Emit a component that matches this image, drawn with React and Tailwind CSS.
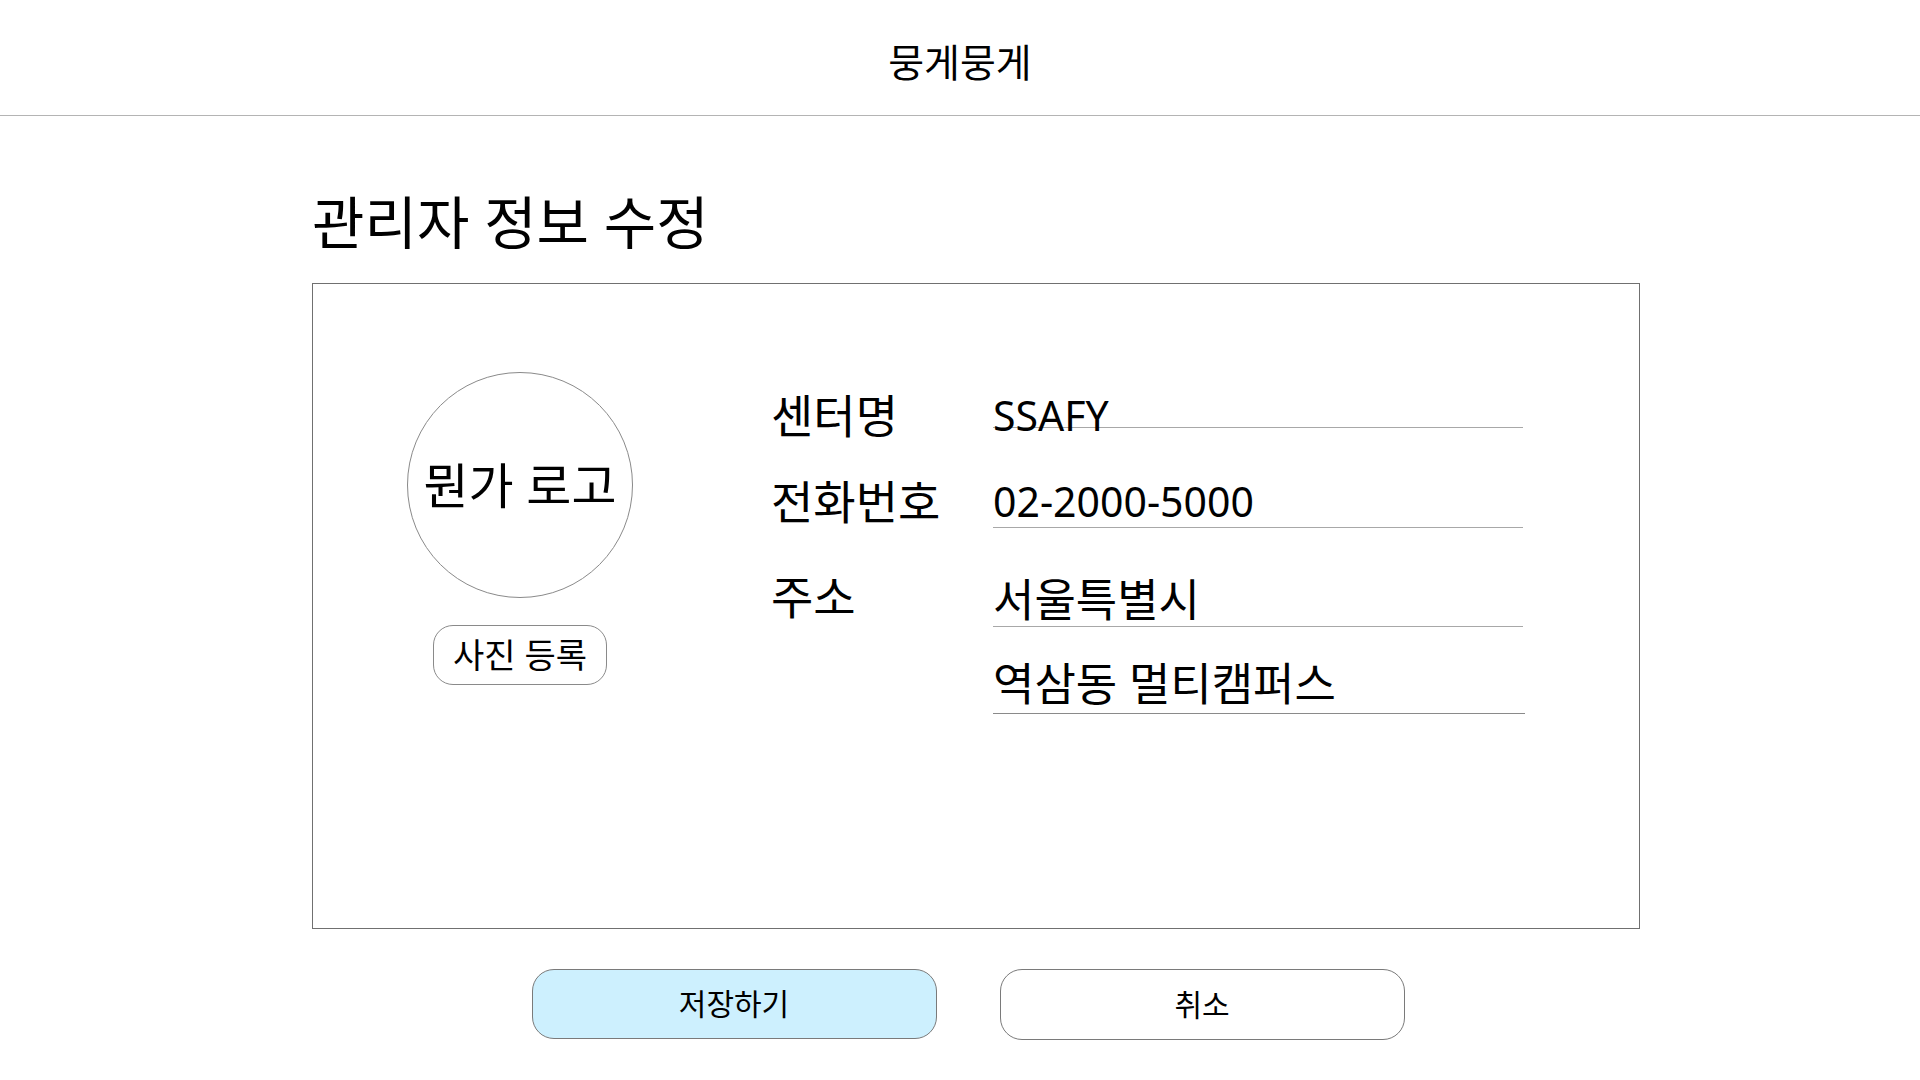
export default function App() {
  const font = "font-['Noto_Sans','Noto_Sans_CJK_KR',sans-serif]"

  return (
    <div className={`min-h-screen bg-white text-black ${font}`}>
      {/* Header */}
      <header className="h-[116px] pt-[9px] border-b border-[#b4b4b4] flex items-center justify-center">
        <h1 className="text-[39px] leading-[44px] font-normal">뭉게뭉게</h1>
      </header>

      <main className="pl-[312px] pt-[75px]">
        <h2 className="text-[57px] leading-[62px] font-normal">관리자 정보 수정</h2>

        {/* Card */}
        <div className="mt-[30px] w-[1328px] h-[646px] border border-[#707070] flex items-start">
          <div className="ml-[94px] mt-[88px] w-[226px] flex flex-col items-center">
            <div className="w-[226px] h-[226px] rounded-full border border-[#8a8a8a] flex items-center justify-center">
              <span className="text-[49px] leading-[54px] whitespace-nowrap">뭔가 로고</span>
            </div>
            <button className="mt-[27px] w-[174px] h-[60px] rounded-[20px] border border-[#8a8a8a] bg-white text-[34px] leading-[40px] whitespace-nowrap">
              사진 등록
            </button>
          </div>

          {/* Form */}
          <div className="ml-[138px] mt-[107px] flex flex-col text-[46px] leading-[48px]">
            <div className="flex items-start">
              <div className="w-[222px]">센터명</div>
              <div className="w-[530px] h-[37px] border-b border-[#a8a8a8] text-[41px] whitespace-nowrap">SSAFY</div>
            </div>
            <div className="flex items-start mt-[38px]">
              <div className="w-[222px]">전화번호</div>
              <div className="w-[530px] h-[51px] border-b border-[#a8a8a8] text-[41px]">02-2000-5000</div>
            </div>
            <div className="flex items-start mt-[44px]">
              <div className="w-[222px]">주소</div>
              <div className="w-[530px] h-[55px] pt-[4px] border-b border-[#a8a8a8] text-[45px]">서울특별시</div>
            </div>
            <div className="flex items-start mt-[30px]">
              <div className="w-[222px]"></div>
              <div className="w-[532px] h-[57px] pt-[3px] border-b border-[#8a8a8a] text-[45px] whitespace-nowrap">역삼동 멀티캠퍼스</div>
            </div>
          </div>
        </div>
      </main>

      {/* Actions */}
      <div className="mt-[40px] pl-[16px] flex justify-center gap-[63px]">
        <button className="w-[405px] h-[70px] rounded-[22px] border border-[#7a7a7a] bg-[#cdf0fe] text-[30px] leading-[36px]">
          저장하기
        </button>
        <button className="w-[405px] h-[71px] rounded-[22px] border border-[#7a7a7a] bg-white text-[30px] leading-[36px]">
          취소
        </button>
      </div>
    </div>
  )
}
